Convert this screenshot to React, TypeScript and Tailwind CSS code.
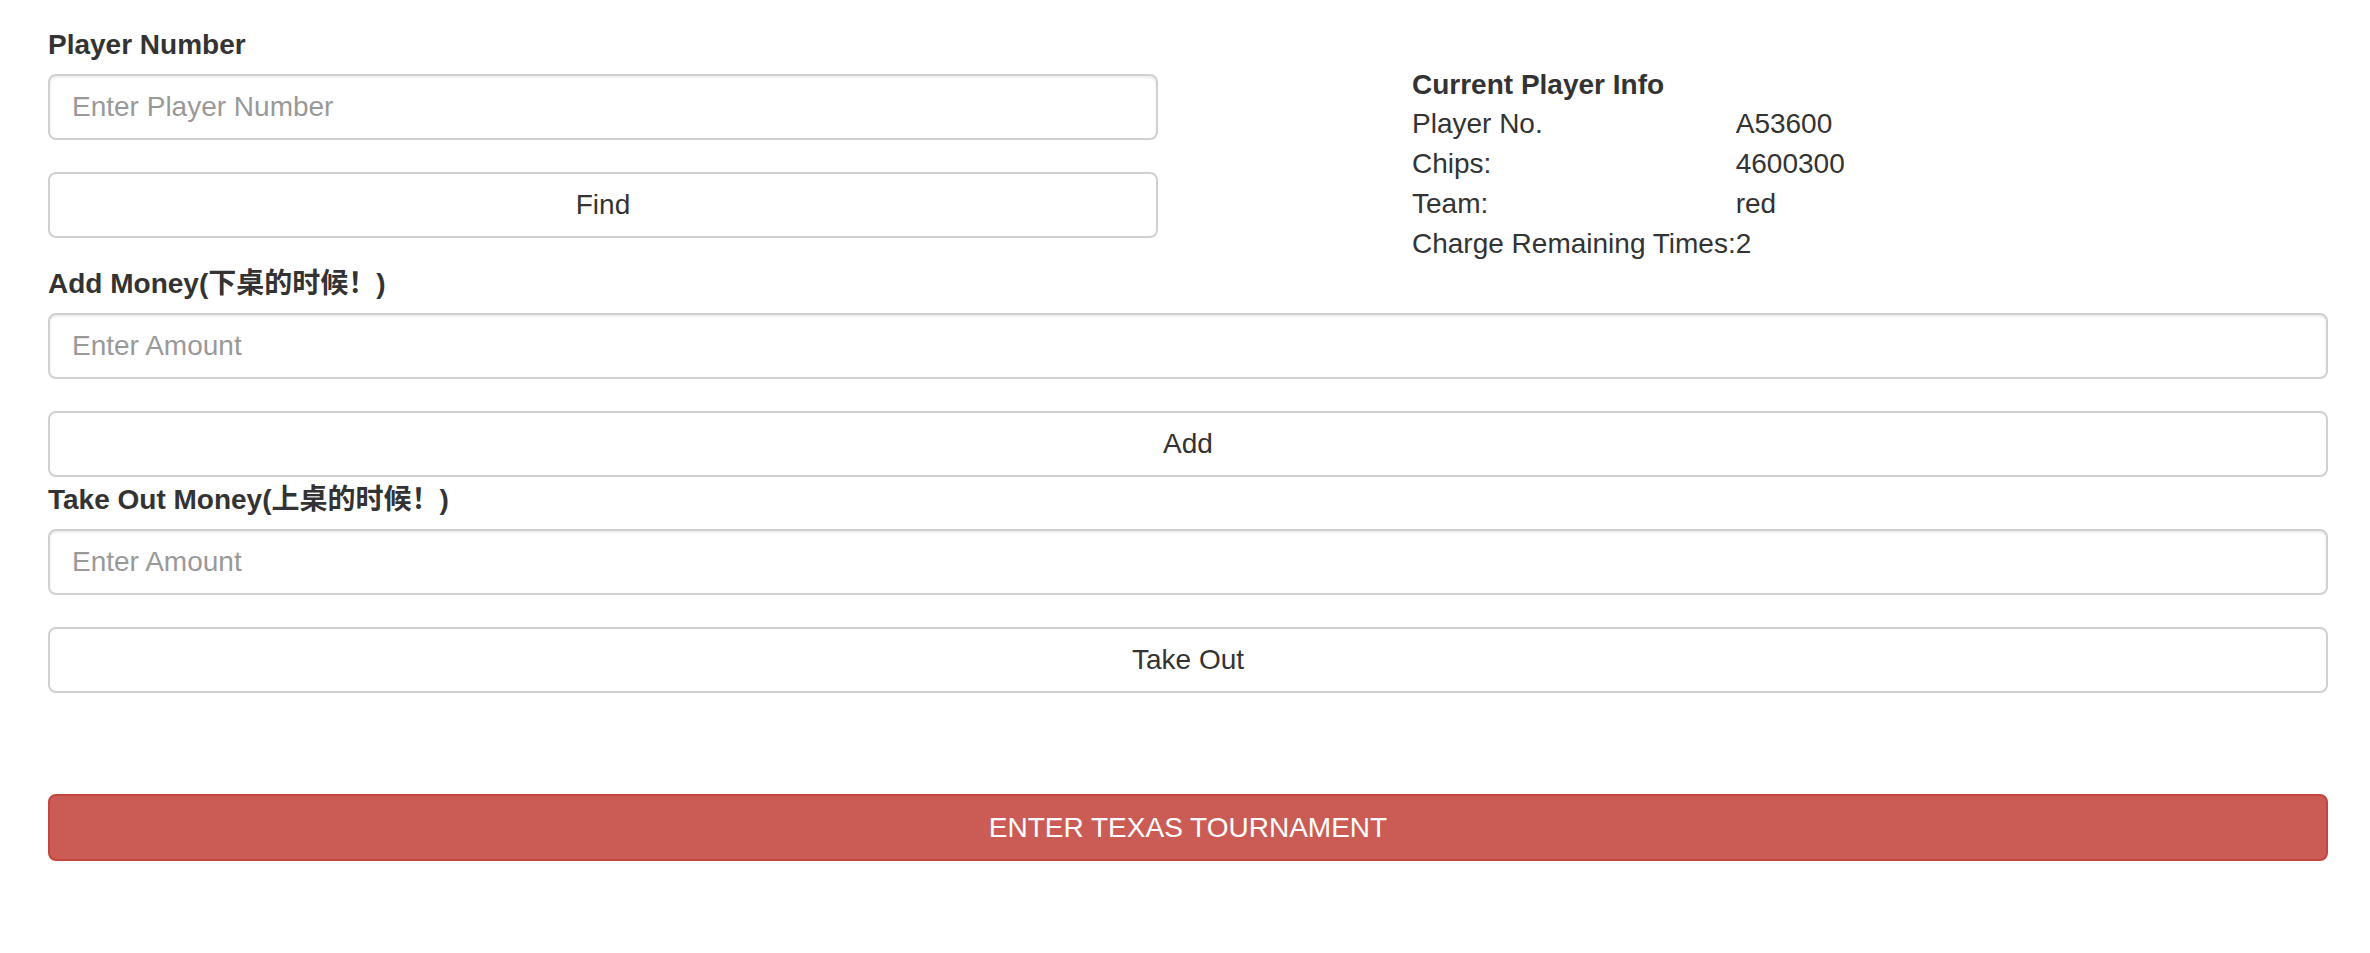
const font = "font-['Liberation_Sans','Noto_Sans_CJK_SC',sans-serif]";

const inputCls =
  "block w-full h-[66px] px-[22px] text-[28px] text-[#333] bg-white border-2 border-[#d0d0d0] rounded-[8px] shadow-[inset_0_2px_2px_rgba(0,0,0,0.075)] outline-none placeholder:text-[#999]";

const btnCls =
  "block w-full h-[66px] text-[28px] text-[#333] bg-white border-2 border-[#d0d0d0] rounded-[8px]";

const Label = ({ children }: { children: React.ReactNode }) => (
  <label className="block pt-[3px] mb-[9px] text-[28px] leading-[40px] font-bold text-[#333]">
    {children}
  </label>
);

const info = [
  ["Player No.", "A53600"],
  ["Chips:", "4600300"],
  ["Team:", "red"],
  ["Charge Remaining Times:", "2"],
];

const App = () => {
  return (
    <div className={`${font} min-h-[953px] bg-white pl-[48px] pr-[42px] pt-[22px]`}>
      <div className="flex">
        <div className="w-[1110px] shrink-0">
          <Label>Player Number</Label>
          <input type="text" placeholder="Enter Player Number" className={inputCls} />
          <button className={`${btnCls} mt-[32px]`}>Find</button>
        </div>
        <div className="ml-[254px] pt-[44px] mb-[-3px] text-[28px] text-[#333]">
          <p className="font-bold leading-[38px]">Current Player Info</p>
          <div className="grid grid-cols-[auto_auto] justify-start leading-[40px]">
            {info.map(([k, v]) => (
              <div key={k} className="contents">
                <span>{k}</span>
                <span>{v}</span>
              </div>
            ))}
          </div>
        </div>
      </div>

      <Label>Add Money(下桌的时候！)</Label>
      <input type="text" placeholder="Enter Amount" className={inputCls} />
      <button className={`${btnCls} mt-[32px]`}>Add</button>

      <Label>Take Out Money(上桌的时候！)</Label>
      <input type="text" placeholder="Enter Amount" className={inputCls} />
      <button className={`${btnCls} mt-[32px]`}>Take Out</button>

      <button className="block w-full h-[67px] mt-[101px] text-[28px] text-white bg-[#cb5c55] border-2 border-[#c2453e] rounded-[8px]">
        ENTER TEXAS TOURNAMENT
      </button>
    </div>
  );
};

export default App;
